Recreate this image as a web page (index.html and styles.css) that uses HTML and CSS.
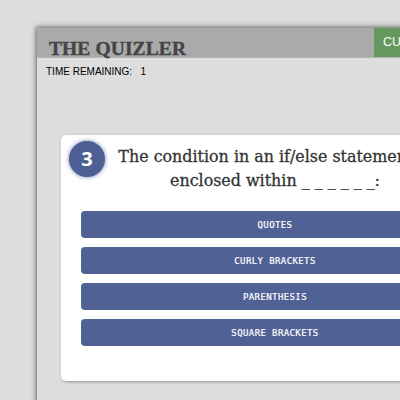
FILE: index.html
```html
<!DOCTYPE html>
<html>
<head>
<meta charset="utf-8">
<link rel="stylesheet" href="styles.css">
</head>
<body>
<div class="panel">
  <header class="header">
    <h1 class="title">THE QUIZLER</h1>
    <nav class="nav"><span class="nav-btn">CURRENT</span></nav>
  </header>
  <div class="timer">TIME REMAINING:   1</div>
  <section class="card">
    <div class="head">
      <div class="num">3</div>
      <p class="question">The condition in an if/else statement is enclosed within _ _ _ _ _ _:</p>
      <div class="spacer"></div>
    </div>
    <div class="answers">
      <button class="answer">QUOTES</button>
      <button class="answer">CURLY BRACKETS</button>
      <button class="answer">PARENTHESIS</button>
      <button class="answer">SQUARE BRACKETS</button>
    </div>
  </section>
</div>
</body>
</html>
```
FILE: styles.css
```css
html, body {
  margin: 0;
  padding: 0;
  overflow: hidden;
  background: #dddddd;
  height: 400px;
}
.panel {
  margin: 28px 0 0 37px;
  width: 760px;
  height: 600px;
  background: #dddddd;
  box-shadow: -1px -1px 5px rgba(0, 0, 0, 0.55);
}
.header {
  display: flex;
  align-items: flex-start;
  height: 29px;
  background: #aaaaaa;
  border-bottom: 1px solid #b5b5b5;
}
.title {
  margin: 0;
  width: 325px;
  padding: 10px 0 0 12px;
  font-family: "Liberation Serif", "Times New Roman", serif;
  font-weight: bold;
  font-size: 19.5px;
  line-height: 22px;
  color: #444444;
  -webkit-text-stroke: 0.4px #444444;
  letter-spacing: 0.1px;
}
.nav {
  display: flex;
}
.nav-btn {
  background: #64995e;
  color: #ffffff;
  font-family: "Liberation Sans", Arial, sans-serif;
  font-size: 12.5px;
  line-height: 29px;
  padding: 0 9px 0 9px;
}
.timer {
  font-family: "Liberation Sans", Arial, sans-serif;
  font-size: 10px;
  color: #000;
  padding: 8px 0 0 9px;
  white-space: pre;
}
.card {
  margin: 58px 0 0 24px;
  width: 428px;
  box-sizing: border-box;
  padding: 6px 20px 35px;
  background: #ffffff;
  border-radius: 5px;
  box-shadow: 1px 1px 3px rgba(0, 0, 0, 0.35);
}
.head {
  display: grid;
  grid-template-columns: 36px 1fr 36px;
  margin: 0 -12px;
  align-items: start;
}
.num {
  width: 36px;
  height: 36px;
  border-radius: 50%;
  background: #4e5f95;
  box-shadow: 0 0 4px rgba(78, 95, 149, 0.8);
  color: #fff;
  font-family: "Open Sans", sans-serif;
  font-weight: bold;
  font-size: 20px;
  line-height: 36px;
  text-align: center;
}
.question {
  margin: 4px 0 0;
  font-family: "DejaVu Serif", serif;
  font-size: 15.9px;
  line-height: 24px;
  color: #333333;
  -webkit-text-stroke: 0.3px #333333;
  text-align: center;
}
.answers {
  display: flex;
  flex-direction: column;
  gap: 9px;
  margin-top: 18px;
}
.answer {
  display: block;
  height: 27px;
  border: none;
  border-radius: 4px;
  background: #506295;
  color: #ffffff;
  font-family: "DejaVu Sans Mono", monospace;
  font-size: 9px;
  letter-spacing: 0.4px;
  -webkit-text-stroke: 0.2px #ffffff;
  text-align: center;
  padding: 0;
}
```
